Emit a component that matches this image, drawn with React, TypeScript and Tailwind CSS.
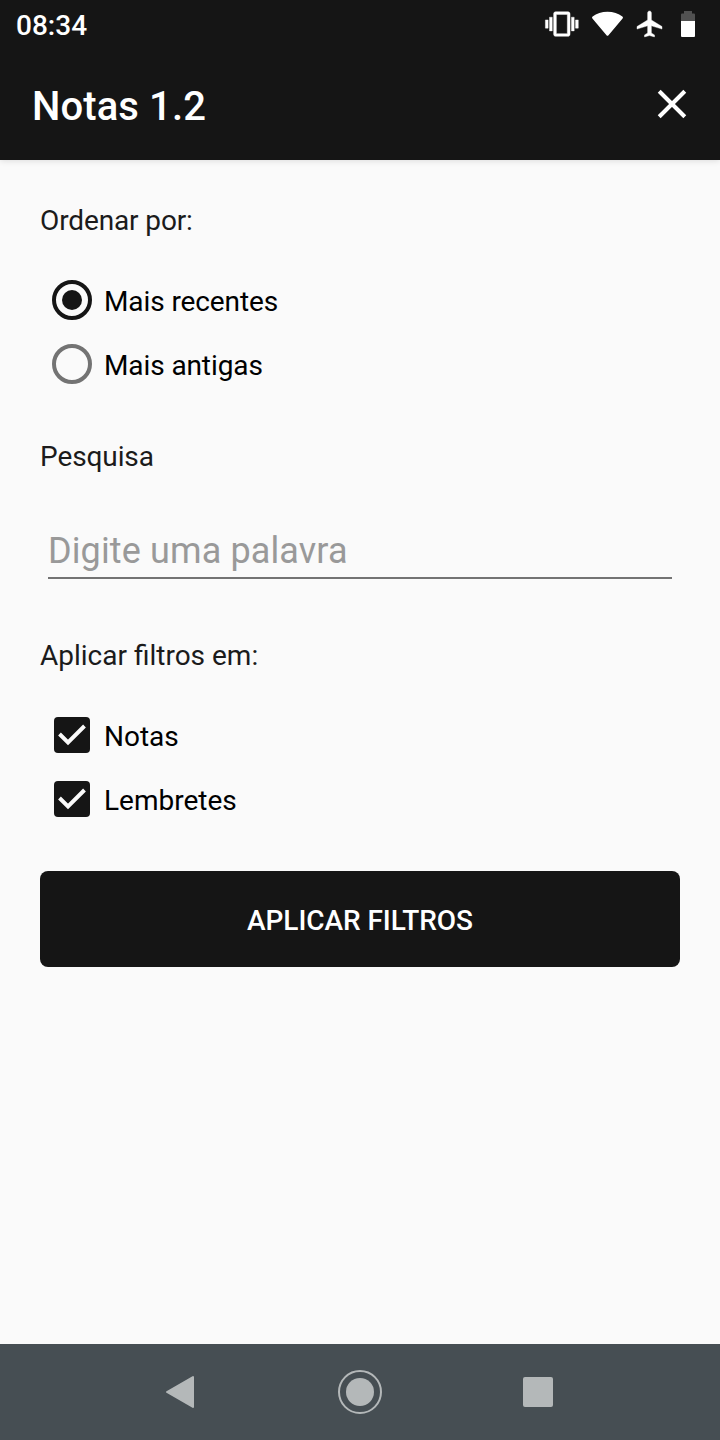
import { useState } from "react";

function StatusIcons() {
  return (
    <svg width="160" height="48" viewBox="560 0 160 48" className="overflow-visible" fill="#fff" aria-hidden="true">
      <g transform="translate(545.4 7.6) scale(1.37)" stroke="#fff" strokeWidth="0.3">
        <path d="M0 15h2V9H0v6zm3 2h2V7H3v10zm19-8v6h2V9h-2zm-3 8h2V7h-2v10zM16.5 3h-9C6.67 3 6 3.67 6 4.5v15c0 .83.67 1.5 1.5 1.5h9c.83 0 1.5-.67 1.5-1.5v-15c0-.83-.67-1.5-1.5-1.5zM16 19H8V5h8v14z" />
      </g>
      <path d="M592.6 16.6C596.5 13.4 601.8 11.7 607.5 11.7S618.5 13.4 622.4 16.6Q623.5 17.5 622.6 18.6L608.5 35.2Q607.5 36.3 606.5 35.2L592.4 18.6Q591.5 17.5 592.6 16.6Z" />
      <g transform="translate(634.5 8.3) scale(1.25 1.3)" stroke="#fff" strokeWidth="0.3">
        <path d="M22 16v-2l-8.5-5V3.5C13.5 2.67 12.83 2 12 2s-1.5.67-1.5 1.500V9L2 14v2l8.5-2.5V19L8 20.5V22l4-1 4 1v-1.5L13.5 19v-5.5L22 16z" />
      </g>
      <path d="M684 11h8v2.5h2q1 0 1 1V21h-14v-6.500q0-1 1-1h2z" fill="#515151" />
      <path d="M681 21h14v15q0 1-1 1h-12q-1 0-1-1z" />
    </svg>
  );
}

interface OptionProps {
  label: string;
  checked: boolean;
  onSelect: () => void;
}

function RadioOption({ label, checked, onSelect }: OptionProps) {
  const color = checked ? "#151515" : "#737373";
  return (
    <button role="radio" aria-checked={checked} onClick={onSelect} className="flex h-16 items-center pl-3 text-black">
      <svg width="40" height="40" viewBox="0 0 40 40" fill="none">
        <circle cx="20" cy="20" r="18" stroke={color} strokeWidth="4" />
        {checked && <circle cx="20" cy="20" r="10" fill={color} />}
      </svg>
      <span className="pt-[3px] pl-3 leading-8 tracking-[-0.1px]">{label}</span>
    </button>
  );
}

function CheckOption({ label, checked, onSelect }: OptionProps) {
  return (
    <button role="checkbox" aria-checked={checked} onClick={onSelect} className="flex h-16 items-center pl-3.5 text-black">
      <svg width="36" height="36" viewBox="0 0 36 36" fill="none">
        {checked ? (
          <>
            <rect width="36" height="36" rx="4" fill="#151515" />
            <path d="M5.500 17L14 25.500L30.500 9" stroke="#fafafa" strokeWidth="3.9" />
          </>
        ) : (
          <rect x="2" y="2" width="32" height="32" rx="3" stroke="#737373" strokeWidth="4" />
        )}
      </svg>
      <span className="pt-[3px] pl-3.5 leading-8">{label}</span>
    </button>
  );
}

export default function App() {
  const [order, setOrder] = useState("recentes");
  const [notes, setNotes] = useState(true);
  const [reminders, setReminders] = useState(true);

  return (
    <div className="flex h-[1440px] w-[720px] flex-col overflow-hidden bg-[#fafafa] font-['Roboto',sans-serif] text-[28px] text-[#1b1b1b]">
      <header className="h-40 shrink-0 bg-[#151515] text-white shadow-[0_1px_6px_rgba(0,0,0,0.12)]">
        <div className="flex h-12 items-center justify-between pl-4">
          <span className="pt-1 font-medium">08:34</span>
          <StatusIcons />
        </div>
        <div className="flex h-28 items-center justify-between pr-8 pl-8">
          <h1 className="pt-1.5 text-[40px] font-medium tracking-[0.1px]">Notas 1.2</h1>
          <button aria-label="Fechar">
            <svg width="32" height="32" viewBox="0 0 32 32" stroke="#fff" strokeWidth="4.1" fill="none">
              <path d="M3.200 3.200L28.800 28.800M28.800 3.200L3.200 28.800" />
            </svg>
          </button>
        </div>
      </header>
      <main className="flex flex-1 flex-col px-10 pt-11">
        <h2 className="h-[33px] leading-[33px] tracking-[-0.12px]">Ordenar por:</h2>
        <div role="radiogroup" className="mt-[31px] flex flex-col items-start">
          <RadioOption label="Mais recentes" checked={order === "recentes"} onSelect={() => setOrder("recentes")} />
          <RadioOption label="Mais antigas" checked={order === "antigas"} onSelect={() => setOrder("antigas")} />
        </div>
        <h2 className="mt-11 h-[33px] leading-[33px] tracking-[-0.1px]">Pesquisa</h2>
        <input
          placeholder="Digite uma palavra"
          className="mx-2 mt-[52px] h-[54px] rounded-none border-b-2 border-[#737373] bg-transparent text-[36px] tracking-[0.12px] outline-none placeholder:text-[#999999]"
        />
        <h2 className="mt-[60px] h-[33px] leading-[33px] [font-variant-ligatures:common-ligatures]">Aplicar filtros em:</h2>
        <div className="mt-[31px] flex flex-col items-start">
          <CheckOption label="Notas" checked={notes} onSelect={() => setNotes(!notes)} />
          <CheckOption label="Lembretes" checked={reminders} onSelect={() => setReminders(!reminders)} />
        </div>
        <button className="mt-10 h-24 rounded-lg bg-[#151515] pt-1 font-medium tracking-[-0.07px] text-white">APLICAR FILTROS</button>
      </main>
      <nav className="h-24 shrink-0 bg-[#464e53]">
        <svg width="720" height="96" viewBox="0 0 720 96" fill="#b4b8b9" aria-hidden="true">
          <path d="M167 48L193 33V63Z" stroke="#b4b8b9" strokeWidth="2" strokeLinejoin="round" />
          <circle cx="360" cy="48" r="21" fill="none" stroke="#b4b8b9" strokeWidth="2" />
          <circle cx="360" cy="48" r="14" />
          <rect x="523" y="33" width="30" height="30" rx="2" />
        </svg>
      </nav>
    </div>
  );
}
